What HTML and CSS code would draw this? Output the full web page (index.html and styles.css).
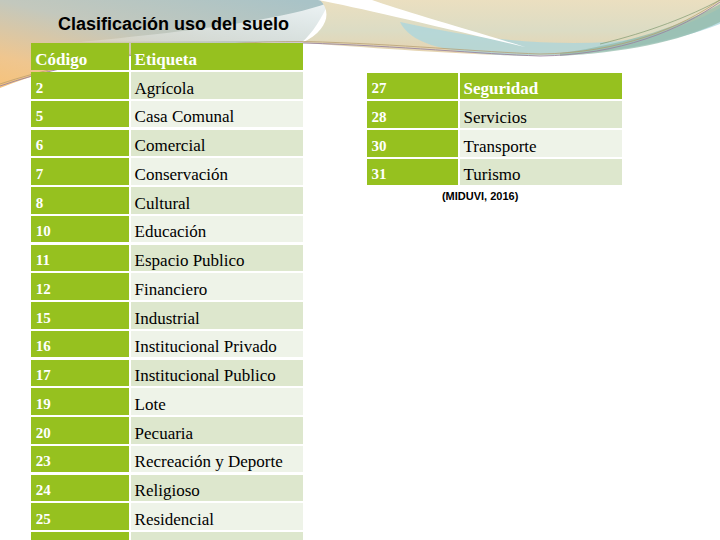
FILE: index.html
```html
<!DOCTYPE html>
<html lang="es">
<head>
<meta charset="utf-8">
<title>Clasificación uso del suelo</title>
<link rel="stylesheet" href="styles.css">
</head>
<body>
<svg class="bg" width="720" height="120" viewBox="0 0 720 120" aria-hidden="true">
  <defs>
    <linearGradient id="gl" x1="0.9" y1="0" x2="0" y2="1">
      <stop offset="0" stop-color="#a9c3c7"/>
      <stop offset="0.45" stop-color="#c3c8bd"/>
      <stop offset="0.8" stop-color="#efc68f"/>
      <stop offset="1" stop-color="#f6c27a"/>
    </linearGradient>
    <linearGradient id="gr" x1="0" y1="0" x2="0" y2="1">
      <stop offset="0" stop-color="#ebdfc0"/>
      <stop offset="0.55" stop-color="#dcdcc4"/>
      <stop offset="1" stop-color="#e8d3ae"/>
    </linearGradient>
    <linearGradient id="gw" x1="1" y1="0" x2="0" y2="1">
      <stop offset="0" stop-color="#ffffff" stop-opacity="1"/>
      <stop offset="1" stop-color="#ffffff" stop-opacity="0.2"/>
    </linearGradient>
  </defs>
  <path d="M0,0 H330 C322,18 312,34 302,42 C200,41 80,56 0,88 Z" fill="url(#gl)"/>
  <path d="M335,0 C300,16 210,30 80,42 C170,42 250,40 302,42 C318,30 332,14 350,0 Z" fill="url(#gw)" opacity="0.85"/>
  <path d="M320,0 H720 V22 C660,46 590,58 500,55 C420,52 350,46 302,43 C328,30 332,12 320,0 Z" fill="url(#gr)"/>
  <path d="M400,22 C470,38 540,46 610,42 C660,37 695,22 720,8 V24 C660,47 585,58 500,55 C440,52 410,42 400,22 Z" fill="#a9d5de" opacity="0.75"/>
  <path d="M560,53 C630,44 685,24 720,4 V22 C680,42 620,53 560,56 Z" fill="#8fb8a7" opacity="0.7"/>
  <path d="M318,0 C360,8 430,25 525,47 C460,27 400,10 372,0 Z" fill="#ffffff"/>
  <path d="M0,86 C80,58 200,42 305,43 C400,46 480,54 540,56 C620,55 680,30 720,2" fill="none" stroke="#9a86a0" stroke-width="0.9"/>
  <path d="M0,84 C80,57 200,41 305,41.5 C400,44 480,52 540,54 C620,53 680,28 720,0" fill="none" stroke="#b49a6a" stroke-width="0.7"/>
  <path d="M600,44 C650,32 690,16 720,0" fill="none" stroke="#7f9a70" stroke-width="0.7"/>
</svg>
<main class="page">
  <h1 class="title">Clasificación uso del suelo</h1>
  <div class="tables">
    <div class="grid left">
      <div class="cell head">Código</div><div class="cell head">Etiqueta</div>
      <div class="cell code">2</div><div class="cell dark">Agrícola</div>
      <div class="cell code">5</div><div class="cell light">Casa Comunal</div>
      <div class="cell code">6</div><div class="cell dark">Comercial</div>
      <div class="cell code">7</div><div class="cell light">Conservación</div>
      <div class="cell code">8</div><div class="cell dark">Cultural</div>
      <div class="cell code">10</div><div class="cell light">Educación</div>
      <div class="cell code">11</div><div class="cell dark">Espacio Publico</div>
      <div class="cell code">12</div><div class="cell light">Financiero</div>
      <div class="cell code">15</div><div class="cell dark">Industrial</div>
      <div class="cell code">16</div><div class="cell light">Institucional Privado</div>
      <div class="cell code">17</div><div class="cell dark">Institucional Publico</div>
      <div class="cell code">19</div><div class="cell light">Lote</div>
      <div class="cell code">20</div><div class="cell dark">Pecuaria</div>
      <div class="cell code">23</div><div class="cell light">Recreación y Deporte</div>
      <div class="cell code">24</div><div class="cell dark">Religioso</div>
      <div class="cell code">25</div><div class="cell light">Residencial</div>
      <div class="cell code"></div><div class="cell dark"></div>
    </div>
    <div class="side">
      <div class="grid right">
        <div class="cell code">27</div><div class="cell head">Seguridad</div>
        <div class="cell code">28</div><div class="cell dark">Servicios</div>
        <div class="cell code">30</div><div class="cell light">Transporte</div>
        <div class="cell code">31</div><div class="cell dark">Turismo</div>
      </div>
      <p class="source">(MIDUVI, 2016)</p>
    </div>
  </div>
</main>
</body>
</html>
```

FILE: styles.css
```css
html, body {
  margin: 0;
  padding: 0;
}
body {
  width: 720px;
  height: 540px;
  overflow: hidden;
  background: #ffffff;
  position: relative;
  font-family: "Liberation Serif", "Times New Roman", serif;
}
.bg {
  position: absolute;
  top: 0;
  left: 0;
  z-index: 0;
}
.page {
  position: relative;
  z-index: 1;
  padding-top: 12.6px;
}
.title {
  margin: 0;
  padding-left: 58px;
  font-family: "Liberation Sans", Arial, sans-serif;
  font-weight: 700;
  font-size: 18px;
  line-height: 22px;
  color: #000;
}
.tables {
  display: flex;
  align-items: flex-start;
  margin-top: 8.7px;
  padding-left: 31.3px;
}
.grid {
  display: grid;
  grid-auto-rows: 26.5px;
  row-gap: 2.25px;
  column-gap: 2px;
}
.left {
  grid-template-columns: 97.3px 172px;
}
.side {
  margin-left: 64.3px;
  margin-top: 29.4px;
}
.right {
  grid-template-columns: 90.7px 162px;
}
.cell {
  display: flex;
  align-items: flex-end;
  padding: 0 4px 2px 4px;
  font-size: 17px;
  line-height: 17px;
  color: #000;
  white-space: nowrap;
  overflow: hidden;
}
.head {
  background: #96c11f;
  color: #fff;
  font-weight: 700;
}
.code {
  background: #96c11f;
  color: #fff;
  font-weight: 700;
  font-size: 15px;
  padding-left: 4.5px;
}
.dark {
  background: #dde7cd;
}
.light {
  background: #eef3e8;
}
.source {
  margin: 4.2px 0 0 0;
  padding-left: 75px;
  font-family: "Liberation Sans", Arial, sans-serif;
  font-weight: 700;
  font-size: 11px;
  line-height: 13px;
  color: #000;
}
```
